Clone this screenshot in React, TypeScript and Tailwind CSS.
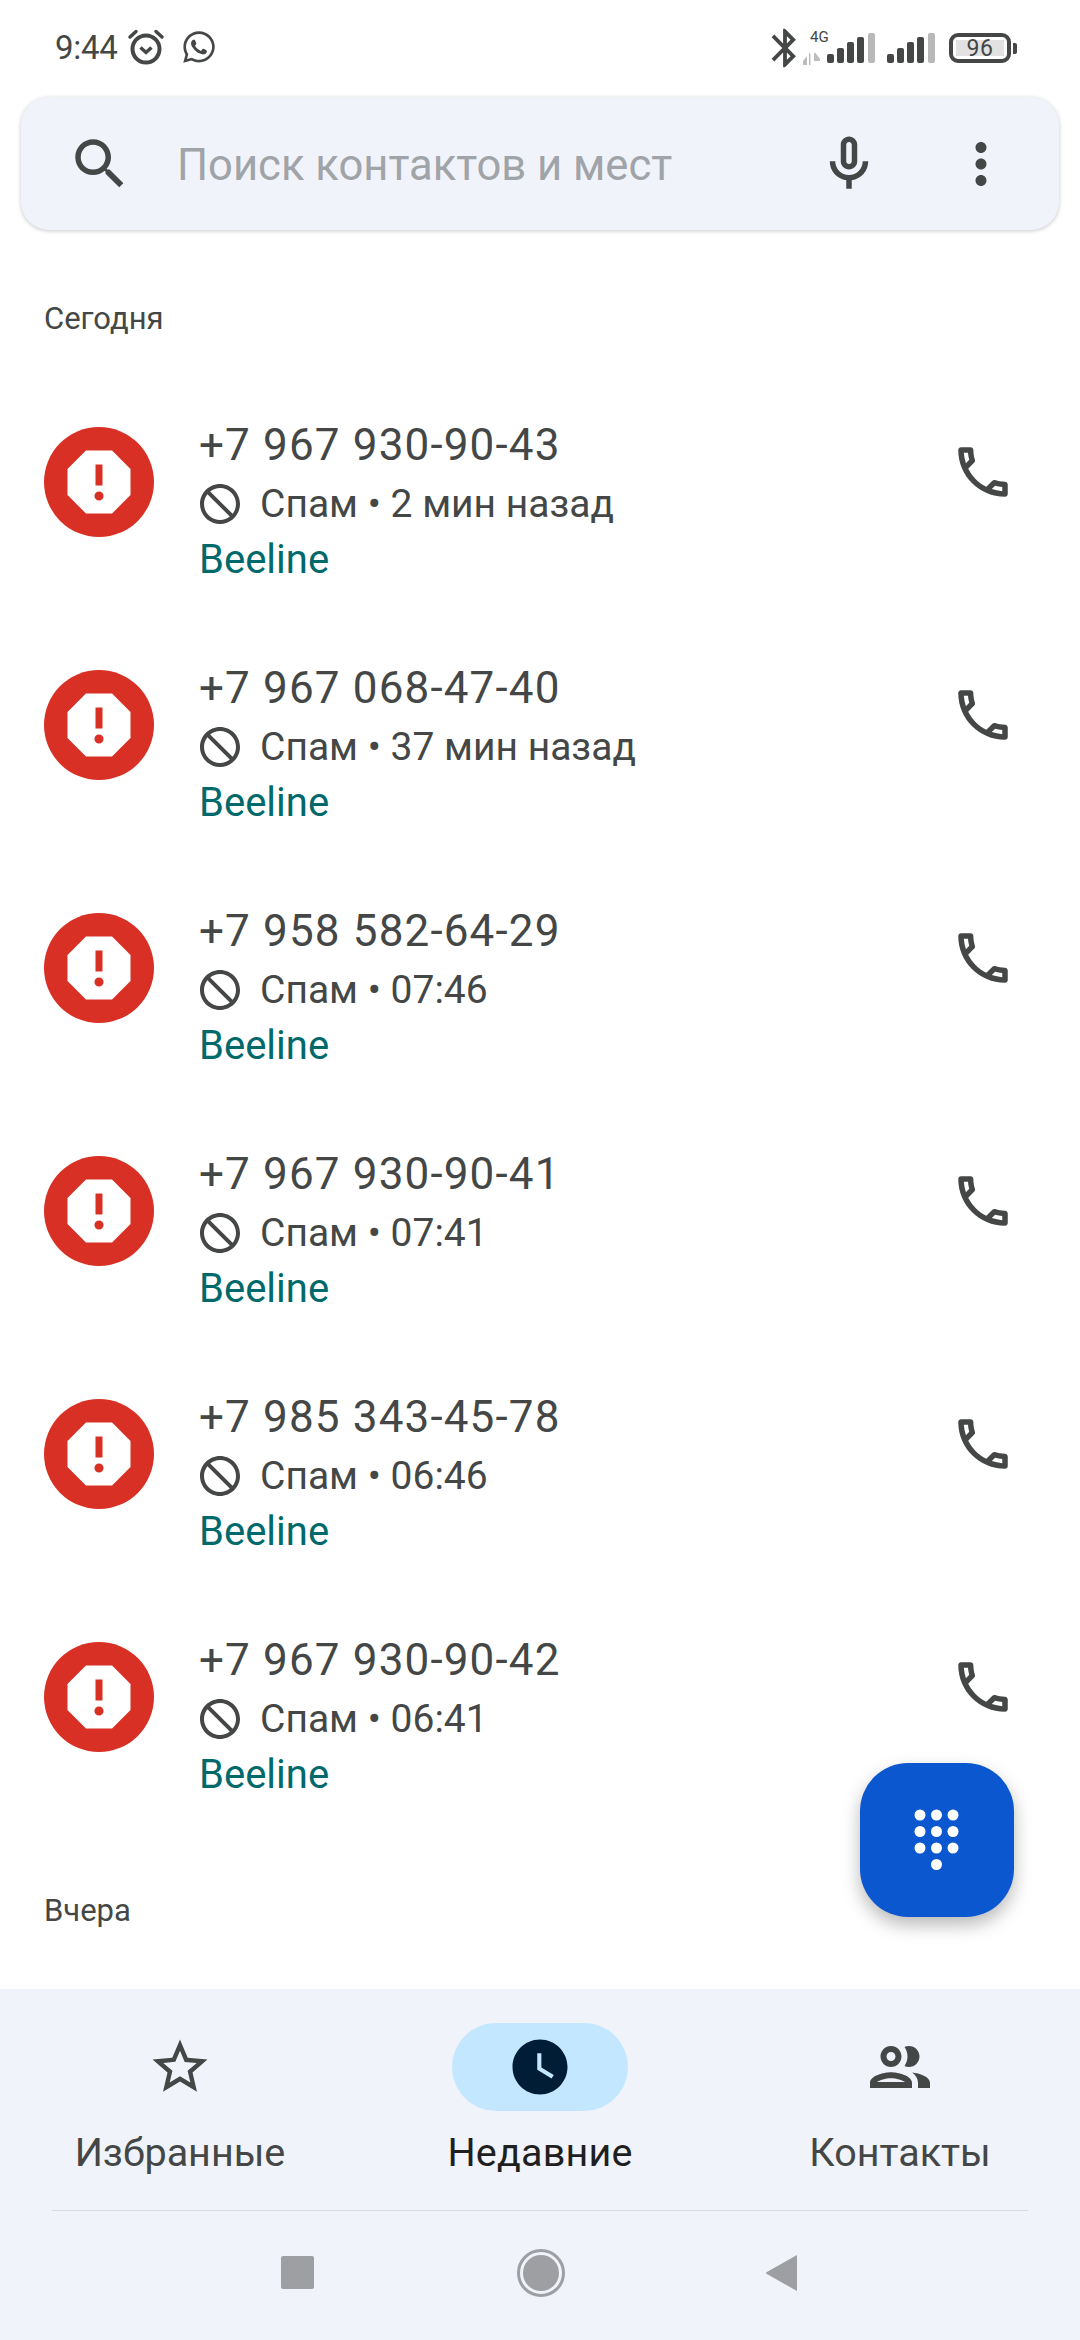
import { FaWhatsapp } from "react-icons/fa";

const font = "font-['Roboto',sans-serif]";

function MdIcon({ d, className }: { d: string; className: string }) {
  return (
    <svg viewBox="0 0 24 24" className={className} fill="currentColor">
      <path d={d} />
    </svg>
  );
}

const icons = {
  search:
    "M15.5 14h-.79l-.28-.27C15.41 12.59 16 11.11 16 9.5 16 5.91 13.09 3 9.5 3S3 5.91 3 9.5 5.91 16 9.5 16c1.61 0 3.09-.59 4.23-1.57l.27.28v.79l5 4.99L20.49 19l-4.99-5zm-6 0C7.01 14 5 11.99 5 9.5S7.01 5 9.5 5 14 7.01 14 9.5 11.99 14 9.5 14z",
  mic: "M12 14c1.66 0 3-1.34 3-3V5c0-1.66-1.34-3-3-3S9 3.34 9 5v6c0 1.66 1.34 3 3 3zm-1-9c0-.55.45-1 1-1s1 .45 1 1v6c0 .55-.45 1-1 1s-1-.45-1-1V5zm6 6c0 2.76-2.24 5-5 5s-5-2.24-5-5H5c0 3.53 2.61 6.43 6 6.92V21h2v-3.08c3.39-.49 6-3.39 6-6.92h-2z",
  more: "M12 8c1.1 0 2-.9 2-2s-.9-2-2-2-2 .9-2 2 .9 2 2 2zm0 2c-1.1 0-2 .9-2 2s.9 2 2 2 2-.9 2-2-.9-2-2-2zm0 6c-1.1 0-2 .9-2 2s.9 2 2 2 2-.9 2-2-.9-2-2-2z",
  report:
    "M15.73 3H8.27L3 8.27v7.46L8.27 21h7.46L21 15.73V8.27L15.73 3zM12 17.3c-.72 0-1.3-.58-1.3-1.3 0-.72.58-1.3 1.3-1.3.72 0 1.3.58 1.3 1.3 0 .72-.58 1.3-1.3 1.3zm1-4.3h-2V7h2v6z",
  block:
    "M12 2C6.48 2 2 6.48 2 12s4.48 10 10 10 10-4.48 10-10S17.52 2 12 2zM4 12c0-4.42 3.58-8 8-8 1.85 0 3.55.63 4.9 1.69L5.69 16.9C4.63 15.55 4 13.85 4 12zm8 8c-1.85 0-3.55-.63-4.9-1.69L18.31 7.1C19.37 8.45 20 10.15 20 12c0 4.42-3.58 8-8 8z",
  call: "M6.54 5c.06.89.21 1.76.45 2.59l-1.2 1.2c-.41-1.2-.67-2.47-.76-3.79h1.51m9.86 12.02c.85.24 1.72.39 2.6.45v1.49c-1.32-.09-2.59-.35-3.8-.75l1.2-1.19M7.5 3H4c-.55 0-1 .45-1 1 0 9.39 7.61 17 17 17 .55 0 1-.45 1-1v-3.49c0-.55-.45-1-1-1-1.24 0-2.45-.2-3.57-.57-.1-.04-.21-.05-.31-.05-.26 0-.51.1-.71.29l-2.2 2.2c-2.83-1.45-5.15-3.76-6.59-6.59l2.2-2.2c.28-.28.36-.67.25-1.02C8.7 6.45 8.5 5.25 8.5 4c0-.55-.45-1-1-1z",
  star: "M22 9.24l-7.19-.62L12 2 9.19 8.63 2 9.24l5.46 4.73L5.82 21 12 17.27 18.18 21l-1.63-7.03L22 9.24zM12 15.4l-3.76 2.27 1-4.28-3.32-2.88 4.38-.38L12 6.1l1.71 4.04 4.38.38-3.32 2.88 1 4.28L12 15.4z",
  clock:
    "M11.99 2C6.47 2 2 6.48 2 12s4.47 10 9.99 10C17.52 22 22 17.52 22 12S17.52 2 11.99 2zM16.2 16.2 11 13V7h1.5v5.2l4.5 2.7-.8 1.3z",
  group:
    "M9 13.75c-2.34 0-7 1.17-7 3.5V19h14v-1.75c0-2.33-4.66-3.5-7-3.5zM4.34 17c.84-.58 2.87-1.25 4.66-1.25s3.82.67 4.66 1.25H4.34zM9 12c1.93 0 3.5-1.57 3.5-3.5S10.93 5 9 5 5.5 6.57 5.5 8.5 7.07 12 9 12zm0-5c.83 0 1.5.67 1.5 1.5S9.83 10 9 10s-1.5-.67-1.5-1.5S8.17 7 9 7zm7.04 6.81c1.16.84 1.96 1.96 1.96 3.44V19h4v-1.75c0-2.02-3.5-3.17-5.96-3.44zM15 12c1.93 0 3.5-1.57 3.5-3.5S16.93 5 15 5c-.54 0-1.04.13-1.5.35.63.89 1 1.98 1 3.15s-.37 2.26-1 3.15c.46.22.96.35 1.5.35z",
  bluetooth:
    "M17.71 7.71 12 2h-1v7.59L6.41 5 5 6.41 10.59 12 5 17.59 6.41 19 11 14.41V22h1l5.71-5.71-4.3-4.29 4.3-4.29zM13 5.83l1.88 1.88L13 9.59V5.83zm1.88 10.46L13 18.17v-3.76l1.88 1.88z",
};

const calls = [
  { number: "+7 967 930-90-43", when: "2 мин назад" },
  { number: "+7 967 068-47-40", when: "37 мин назад" },
  { number: "+7 958 582-64-29", when: "07:46" },
  { number: "+7 967 930-90-41", when: "07:41" },
  { number: "+7 985 343-45-78", when: "06:46" },
  { number: "+7 967 930-90-42", when: "06:41" },
];

function SignalBars({ className }: { className: string }) {
  return (
    <svg viewBox="0 0 48 30" className={className}>
      <rect x="0" y="21" width="7" height="9" rx="2" fill="#444746" />
      <rect x="10" y="15" width="7" height="15" rx="2" fill="#444746" />
      <rect x="20" y="9" width="7" height="21" rx="2" fill="#444746" />
      <rect x="30" y="4" width="7" height="26" rx="2" fill="#444746" />
      <rect x="41" y="0" width="7" height="30" rx="2" fill="#b9b9b9" />
    </svg>
  );
}

function StatusBar() {
  return (
    <div className="h-[97px] flex items-start justify-between pt-[27px] pl-[55px] pr-[63px] text-[#444746]">
      <div className="flex items-center h-[40px]">
        <span className="text-[33px] leading-none tracking-[-0.3px]">9:44</span>
        <svg viewBox="0 0 38 38" className="w-[38px] h-[38px] ml-[10px]" fill="none" stroke="#444746">
          <circle cx="19" cy="21" r="13.5" strokeWidth="4" />
          <path d="M13.5 19.5 19 24.5l5.5-5" strokeWidth="3.5" />
          <path d="M3 9 9 3.5M35 9l-6-5.5" strokeWidth="3.5" strokeLinecap="round" />
        </svg>
        <FaWhatsapp className="w-[36px] h-[36px] ml-[16px]" />
      </div>
      <div className="flex items-center h-[40px] mt-[1px]">
        <MdIcon d={icons.bluetooth} className="w-[46px] h-[46px]" />
        <div className="relative w-[24px] h-[30px] ml-[-5px] self-end mb-[3px]">
          <span className="absolute top-[-5px] left-[7px] text-[15px] leading-none">4G</span>
          <svg viewBox="0 0 18 12" className="absolute left-0 bottom-0 w-[18px] h-[12px]" fill="#bdbdbd">
            <path d="M0 8 4 3v9H0zM6 12V0l1.500 1v11zM11 0l1.500 0 4.500 6v2h-6z" />
          </svg>
        </div>
        <SignalBars className="w-[48px] h-[30px]" />
        <SignalBars className="w-[48px] h-[30px] ml-[12px]" />
        <div className="ml-[14px] w-[62px] h-[30px] border-[4px] border-[#444746] rounded-[9px] p-[3px]">
          <div className="h-full bg-[#e2e2e2] flex items-center justify-center text-[23px] leading-none tracking-[0.5px]">
            96
          </div>
        </div>
        <div className="w-[4px] h-[11px] bg-[#444746] rounded-r-[2px] ml-[2px]" />
      </div>
    </div>
  );
}

function SearchBar() {
  return (
    <div className="mx-[21px] h-[133px] rounded-[28px] bg-[#f0f3fa] shadow-[0_1px_4px_rgba(0,0,0,0.22)] flex items-center pl-[60px] pr-[45px] text-[#444746]">
      <MdIcon d={icons.search} className="w-[66px] h-[66px] -ml-[14px] shrink-0" />
      <span className="ml-[44px] pt-[5px] flex-1 text-[43.6px] leading-none text-[#a0a3a7]">Поиск контактов и мест</span>
      <MdIcon d={icons.mic} className="w-[66px] h-[66px] shrink-0" />
      <MdIcon d={icons.more} className="w-[66px] h-[66px] ml-[66px] shrink-0" />
    </div>
  );
}

function CallRow({ number, when }: { number: string; when: string }) {
  return (
    <div className="h-[243px] flex items-start pl-[44px] pr-[64px] text-[#444746]">
      <div className="mt-[66px] w-[110px] h-[110px] rounded-full bg-[#d93025] flex items-center justify-center text-white shrink-0">
        <MdIcon d={icons.report} className="w-[84px] h-[84px]" />
      </div>
      <div className="ml-[45px] mt-[56px] flex-1">
        <div className="h-[56px] text-[44px] leading-[56px] tracking-[1.15px]">{number}</div>
        <div className="h-[58px] flex items-center mt-[2px]">
          <MdIcon d={icons.block} className="w-[48px] h-[48px] -ml-[3px] shrink-0 -scale-x-100" />
          <span className="ml-[16px] text-[39px] leading-none">Спам • {when}</span>
        </div>
        <div className="h-[50px] pt-[1px] text-[40px] leading-[52px] text-[#00696b]">Beeline</div>
      </div>
      <MdIcon d={icons.call} className="mt-[78px] w-[66px] h-[66px] shrink-0" />
    </div>
  );
}

function Dialpad() {
  return (
    <div className="absolute right-[66px] bottom-[72px] w-[154px] h-[154px] rounded-[48px] bg-[#0b57d0] shadow-[0_8px_18px_rgba(0,0,0,0.28)] flex items-center justify-center">
      <svg viewBox="0 0 50 66" className="w-[50px] h-[66px]" fill="white">
        {[0, 1, 2].map((r) =>
          [0, 1, 2].map((c) => <circle key={`${r}${c}`} cx={8 + c * 16.5} cy={8 + r * 16.5} r="5.5" />)
        )}
        <circle cx="24.5" cy="57.5" r="5.5" />
      </svg>
    </div>
  );
}

function NavTab({ icon, label, active, iconClass }: { icon: string; label: string; active?: boolean; iconClass?: string }) {
  return (
    <div className="flex-1 flex flex-col items-center">
      <div className={`w-[176px] h-[88px] rounded-full flex items-center justify-center ${active ? "bg-[#c2e7ff] text-[#001d35]" : "text-[#444746]"}`}>
        <MdIcon d={icon} className={iconClass ?? "w-[66px] h-[66px]"} />
      </div>
      <span className={`mt-[18px] text-[39.5px] leading-[48px] whitespace-nowrap ${active ? "font-[450] text-[#1f1f1f] tracking-[0.2px]" : "text-[#444746]"}`}>
        {label}
      </span>
    </div>
  );
}

export default function App() {
  return (
    <div className={`w-[1080px] h-[2340px] bg-white flex flex-col overflow-hidden ${font}`}>
      <StatusBar />
      <SearchBar />

      <div className="relative flex-1 min-h-0">
        <div className="h-[131px] pt-[68px] pl-[44px] text-[31px] leading-[42px] text-[#444746]">Сегодня</div>
        {calls.map((c) => (
          <CallRow key={c.number} number={c.number} when={c.when} />
        ))}
        <div className="pt-[71px] pl-[44px] text-[31px] leading-[42px] text-[#444746]">Вчера</div>
        <Dialpad />
      </div>

      <div className="h-[351px] bg-[#f0f3fa] shrink-0 flex flex-col">
        <div className="flex pt-[34px] px-0 h-[221px]">
          <NavTab icon={icons.star} label="Избранные" />
          <NavTab icon={icons.clock} label="Недавние" active />
          <NavTab icon={icons.group} label="Контакты" iconClass="w-[72px] h-[72px]" />
        </div>
        <div className="mx-[52px] h-[1px] bg-[#d8dbe0]" />
        <div className="flex-1 flex items-center justify-center pb-[6px] pr-[2px]">
          <div className="w-[33px] h-[33px] rounded-[2px] bg-[#9d9fa3]" />
          <div className="ml-[203px] w-[48px] h-[48px] rounded-full border-[3px] border-[#9d9fa3] p-[3px]">
            <div className="w-full h-full rounded-full bg-[#9d9fa3]" />
          </div>
          <svg viewBox="0 0 32 38" className="ml-[200px] w-[32px] h-[38px]" fill="#9d9fa3">
            <path d="M32 1v36L1 19.5V18.5z" />
          </svg>
        </div>
      </div>
    </div>
  );
}
